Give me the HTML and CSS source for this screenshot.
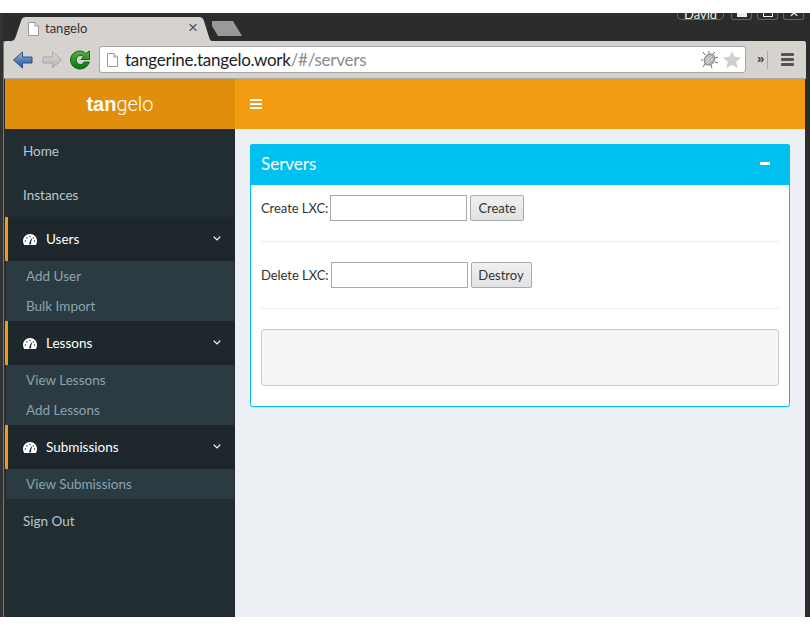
FILE: index.html
```html
<!DOCTYPE html>
<html lang="en">
<head>
<meta charset="utf-8">
<title>tangelo</title>
<link rel="stylesheet" href="styles.css">
</head>
<body>
<svg class="defs" width="0" height="0" aria-hidden="true">
  <defs>
    <linearGradient id="blue" x1="0" y1="0" x2="0" y2="1"><stop offset="0" stop-color="#a9c2e2"/><stop offset=".5" stop-color="#4f7fb8"/><stop offset="1" stop-color="#2d5b98"/></linearGradient>
    <linearGradient id="grey" x1="0" y1="0" x2="0" y2="1"><stop offset="0" stop-color="#dcdcdc"/><stop offset="1" stop-color="#b2b2b2"/></linearGradient>
    <linearGradient id="green" x1="0" y1="0" x2="0" y2="1"><stop offset="0" stop-color="#4fb53c"/><stop offset="1" stop-color="#0a730d"/></linearGradient>
    <symbol id="gauge" viewBox="0 0 14 11">
      <path d="M7 0C3.100 0 0 3.100 0 7c0 1.500.4 2.800 1.200 4h11.600c.8-1.200 1.200-2.500 1.200-4 0-3.900-3.100-7-7-7z" fill="#fff"/>
      <g fill="#1e282c">
        <rect x="1.800" y="6.400" width="1.200" height="1.200"/><rect x="3.200" y="3.200" width="1.200" height="1.200"/><rect x="6.400" y="1.800" width="1.200" height="1.200"/><rect x="9.600" y="3.200" width="1.200" height="1.200"/><rect x="11" y="6.400" width="1.200" height="1.200"/>
        <path d="M6 10.200 8.100 4.300l.7.2L7.900 10.400z"/>
      </g>
    </symbol>
    <symbol id="chev" viewBox="0 0 8 5"><path d="M.7.700 4 4 7.300.700" fill="none" stroke="#fff" stroke-width="1.200"/></symbol>
    <symbol id="doc" viewBox="0 0 11 14"><path d="M.5.500h6.500l3.500 3.500v9.500H.5z" fill="#fff" stroke="#9a9a9a"/><path d="M7 .500v3.500h3.500" fill="#e4e4e4" stroke="#9a9a9a"/></symbol>
  </defs>
</svg>
<div class="window">
  <div class="tabstrip">
    <div class="tab">
      <svg class="fav" width="11" height="14"><use href="#doc"/></svg>
      <span class="tab-title">tangelo</span>
      <span class="tab-close">×</span>
    </div>
    <div class="newtab"></div>
    <div class="wm">
      <span class="wm-user">David</span>
      <span class="wm-btn"><i class="wm-min"></i></span>
      <span class="wm-btn"><i class="wm-max"></i></span>
      <span class="wm-btn wm-x">✕</span>
    </div>
  </div>
  <div class="toolbar">
    <svg class="nav-icon" width="20" height="18" viewBox="0 0 20 18"><path d="M.500 9 9.500 1v5h9.500v6H9.500v5z" fill="url(#blue)" stroke="#2c5287"/></svg>
    <svg class="nav-icon" width="20" height="18" viewBox="0 0 20 18"><path d="M19.500 9 10.500 1v5H1v6h9.500v5z" fill="url(#grey)" stroke="#aaa"/></svg>
    <svg class="nav-icon" width="21" height="20" viewBox="0 0 21 20"><path d="M10 1c2.400 0 4.400 1 5.800 2.500L19.500 1v8.500H11l2.800-2.800C13 6 11.600 5.500 10.500 5.500 8 5.500 6.200 7.400 6.200 10s1.800 4.500 4.300 4.500c1.600 0 2.800-.9 3.500-2.500h5.300c-1.200 4-4.800 7-9.300 7-5.300 0-9.500-4-9.500-9S4.700 1 10 1z" fill="url(#green)" stroke="#0a5a0d" stroke-width=".9"/></svg>
    <div class="omnibox">
      <svg class="omni-doc" width="11" height="14"><use href="#doc"/></svg>
      <span class="url"><span class="url-host">tangerine.tangelo.work</span><span class="url-path">/#/servers</span></span>
      <svg class="bug" width="17" height="17" viewBox="0 0 17 17"><g stroke="#6e6e6e" stroke-width="1"><path d="M4 4 2 1M2 9H0M4 13l-2 3M8 3 8 0M12 3l2-2M14 7l3-1M14 11l3 1M10 14l1 3"/></g><ellipse cx="8.500" cy="8.500" rx="4.800" ry="6" transform="rotate(40 8.500 8.500)" fill="#b4b4b4" stroke="#8a8a8a"/><path d="M5 11l6-6M6 12.500l6-5M4.500 8.500l4-4" stroke="#e2e2e2"/></svg>
      <svg class="star" width="18" height="17" viewBox="0 0 18 17"><path d="M9 0l2.700 5.800 6.300.7-4.700 4.300 1.300 6.200L9 13.900 3.400 17l1.300-6.200L0 6.500l6.300-.7z" fill="#d2d0ce"/></svg>
    </div>
    <span class="ext-more">»</span>
    <span class="ext-sep"></span>
    <span class="menu-btn"><i></i><i></i><i></i></span>
  </div>
  <div class="page">
    <header class="topbar">
      <div class="logo"><b>tan</b><span>gelo</span></div>
      <div class="nav"><span class="burger"><i></i><i></i><i></i></span></div>
    </header>
    <div class="content">
      <aside class="sidebar">
        <a class="item">Home</a>
        <a class="item">Instances</a>
        <a class="item open"><svg class="gauge" width="14" height="11"><use href="#gauge"/></svg><span>Users</span><svg class="chev" width="8" height="5"><use href="#chev"/></svg></a>
        <div class="sub"><a>Add User</a><a>Bulk Import</a></div>
        <a class="item open"><svg class="gauge" width="14" height="11"><use href="#gauge"/></svg><span>Lessons</span><svg class="chev" width="8" height="5"><use href="#chev"/></svg></a>
        <div class="sub"><a>View Lessons</a><a>Add Lessons</a></div>
        <a class="item open"><svg class="gauge" width="14" height="11"><use href="#gauge"/></svg><span>Submissions</span><svg class="chev" width="8" height="5"><use href="#chev"/></svg></a>
        <div class="sub"><a>View Submissions</a></div>
        <a class="item">Sign Out</a>
      </aside>
      <main class="main">
        <section class="panel">
          <div class="panel-head"><h3>Servers</h3><span class="collapse"></span></div>
          <div class="panel-body">
            <div class="row"><label>Create LXC:</label><input class="field" type="text"><button class="btn create">Create</button></div>
            <hr>
            <div class="row"><label>Delete LXC:</label><input class="field" type="text"><button class="btn destroy">Destroy</button></div>
            <hr>
            <div class="well"></div>
          </div>
        </section>
      </main>
    </div>
  </div>
</div>
</body>
</html>
```
FILE: styles.css
```css
* { box-sizing: border-box; }
html, body { margin: 0; height: 630px; overflow: hidden; background: #fff; }
body { padding-top: 13px; font-family: "Lato", "Open Sans", sans-serif; }
.defs { position: absolute; }
.window { height: 604px; background: #2c2c2c; display: flex; flex-direction: column; padding: 0 4px 0 5px; box-shadow: inset 3px 0 0 #333; position: relative; }
.window::before { content: ""; position: absolute; left: 3px; top: 28px; bottom: 0; width: 1px; background: #777; }

.tabstrip { height: 28px; display: flex; align-items: flex-end; flex: none; position: relative; margin-left: -1px; }
.tab { width: 202px; height: 24px; margin-left: 6px; background: #d6d2ce; display: flex; align-items: center; padding: 0 14px 0 18px; clip-path: path("M0 24C4 24 5 22 6 19L11 4C12 1 13 0 17 0H188C192 0 193 1 194 4L199 20C200 23 201 24 202 24Z"); }
.fav { flex: none; margin-right: 6px; margin-bottom: 1px; }
.tab-title { flex: 1; font-size: 13px; color: #333; margin-bottom: 2px; }
.tab-close { font-size: 17px; line-height: 14px; color: #555; font-family: "Liberation Sans", sans-serif; margin-bottom: 2px; }
.newtab { width: 31px; height: 15px; margin: 0 0 5px -1px; background: #999; clip-path: polygon(1px 0, 22px 0, 31px 15px, 7px 15px, 1px 5px); }
.wm { position: absolute; top: 0; right: 2px; height: 7px; overflow: hidden; display: flex; gap: 5px; align-items: flex-end; }
.wm-user { width: 47px; height: 7px; border: 1px solid #666; border-top: 0; border-radius: 0 0 5px 5px; color: #eee; font-size: 13px; text-align: center; line-height: 2px; margin-right: 2px; white-space: nowrap; }
.wm-btn { width: 21px; height: 7px; border: 1px solid #666; border-top: 0; border-radius: 0 0 3px 3px; display: flex; justify-content: center; align-items: flex-start; color: #eee; font-size: 11px; line-height: 1; overflow: hidden; }
.wm-min { width: 10px; height: 4px; background: #eee; }
.wm-max { width: 10px; height: 4px; border: 1px solid #eee; border-top: 0; }
.wm-x { line-height: 0; font-size: 12px; }

.toolbar { height: 38px; flex: none; background: #d6d2ce; border-bottom: 1px solid #a9a7a4; display: flex; align-items: center; padding: 0 10px 0 9px; margin-left: -1px; width: 802px; border-radius: 2px 2px 0 0; }
.nav-icon { flex: none; margin-right: 9px; }
.nav-icon:nth-child(2), .nav-icon:nth-child(3) { margin-right: 8px; }
.omnibox { width: 647px; height: 27px; background: #fff; border: 1px solid #a9a7a4; border-radius: 3px; display: flex; align-items: center; padding: 0 4px 0 7px; flex: none; }
.omni-doc { flex: none; margin-right: 7px; }
.url { flex: 1; font-size: 17px; letter-spacing: -.25px; white-space: nowrap; }
.url-host { color: #222; }
.url-path { color: #8a8a8a; }
.bug { flex: none; margin-right: 5px; }
.star { flex: none; }
.ext-more { margin-left: 11px; font-size: 13px; color: #444; font-family: "Liberation Sans", sans-serif; font-weight: bold; line-height: 1; margin-bottom: 2px; }
.ext-sep { width: 1px; height: 18px; background: #aaa; margin-left: 3px; }
.menu-btn { margin-left: 13px; width: 13px; display: flex; flex-direction: column; gap: 2px; }
.menu-btn i { display: block; height: 3px; background: #555; border-radius: 1px; }

.page { flex: 1; min-height: 0; display: flex; flex-direction: column; background: #ecf0f5; width: 800px; }
.topbar { height: 50px; flex: none; display: flex; color: #fff; background: #f39c12; }
.logo { width: 230px; background: #e08e0b; text-align: center; line-height: 50px; font-size: 20px; font-family: "Liberation Sans", sans-serif; }
.logo span { font-family: "Roboto", sans-serif; font-weight: 300; }
.nav { flex: 1; display: flex; align-items: center; padding-left: 15px; }
.burger { width: 12px; display: flex; flex-direction: column; gap: 2px; }
.burger i { display: block; height: 2px; background: #fff; }

.content { flex: 1; min-height: 0; display: flex; }
.sidebar { width: 230px; flex: none; background: #222d32; font-size: 13.500px; }
.item { height: 44px; display: flex; align-items: center; padding: 1px 0 1px 18px; color: #b8c7ce; }
.item.open { background: #1e282c; color: #fff; border-left: 3px solid #f39c12; padding-left: 15px; }
.gauge { flex: none; margin-right: 9px; }
.item.open span { flex: 1; }
.chev { flex: none; margin: 0 14px 2px 0; }
.sub { background: #2c3b41; margin: 0 1px; }
.sub a { display: flex; height: 30px; align-items: center; padding: 1px 0 1px 20px; color: #8aa4af; }

.main { flex: 1; padding: 15px; }
.panel { border: 1px solid #00c0ef; border-radius: 3px; background: #fff; height: 263px; box-shadow: 0 1px 1px rgba(0,0,0,.1); }
.panel-head { height: 41px; margin: -1px -1px 0; border-radius: 3px 3px 0 0; background: #00c0ef; color: #fff; display: flex; align-items: center; justify-content: space-between; padding: 0 20px 2px 11px; }
.panel-head h3 { margin: 0; font-weight: 400; font-size: 17px; }
.collapse { width: 10px; height: 3px; background: #fff; }
.panel-body { padding: 10px; color: #333; font-size: 13px; }
.row { display: flex; align-items: center; height: 26px; }
label { margin-right: 2px; letter-spacing: -.05px; }
.field { width: 137px; height: 26px; border: 1px solid #a9a9a9; background: #fff; padding: 0; margin: 0 3px 0 0; }
.btn { height: 26px; padding: 0; border: 1px solid #aaa; border-radius: 2px; background: linear-gradient(#f0f0f0, #e2e2e2); font: inherit; color: #333; }
.create { width: 54px; }
.destroy { width: 61px; }
hr { border: 0; border-top: 1px solid #eee; margin: 20px 0; height: 0; }
.well { height: 57px; margin-top: 20px; background: #f5f5f5; border: 1px solid #ccc; border-radius: 3px; }
```
